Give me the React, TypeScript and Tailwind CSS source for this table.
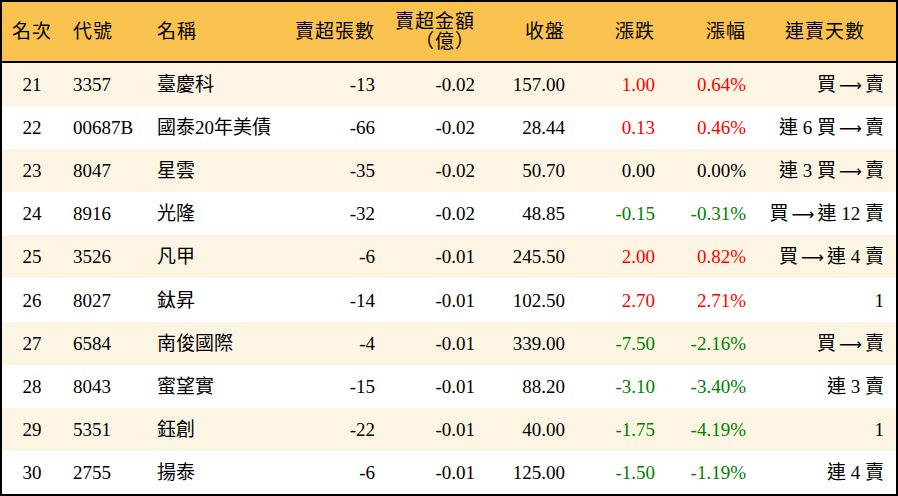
import React from 'react';

type Row = {
  rank: number;
  code: string;
  name: string;
  lots: string;
  amount: string;
  close: string;
  change: string;
  pct: string;
  streak: string;
};

const rows: Row[] = [
  { rank: 21, code: '3357', name: '臺慶科', lots: '-13', amount: '-0.02', close: '157.00', change: '1.00', pct: '0.64%', streak: '買 → 賣' },
  { rank: 22, code: '00687B', name: '國泰20年美債', lots: '-66', amount: '-0.02', close: '28.44', change: '0.13', pct: '0.46%', streak: '連 6 買 → 賣' },
  { rank: 23, code: '8047', name: '星雲', lots: '-35', amount: '-0.02', close: '50.70', change: '0.00', pct: '0.00%', streak: '連 3 買 → 賣' },
  { rank: 24, code: '8916', name: '光隆', lots: '-32', amount: '-0.02', close: '48.85', change: '-0.15', pct: '-0.31%', streak: '買 → 連 12 賣' },
  { rank: 25, code: '3526', name: '凡甲', lots: '-6', amount: '-0.01', close: '245.50', change: '2.00', pct: '0.82%', streak: '買 → 連 4 賣' },
  { rank: 26, code: '8027', name: '鈦昇', lots: '-14', amount: '-0.01', close: '102.50', change: '2.70', pct: '2.71%', streak: '1' },
  { rank: 27, code: '6584', name: '南俊國際', lots: '-4', amount: '-0.01', close: '339.00', change: '-7.50', pct: '-2.16%', streak: '買 → 賣' },
  { rank: 28, code: '8043', name: '蜜望實', lots: '-15', amount: '-0.01', close: '88.20', change: '-3.10', pct: '-3.40%', streak: '連 3 賣' },
  { rank: 29, code: '5351', name: '鈺創', lots: '-22', amount: '-0.01', close: '40.00', change: '-1.75', pct: '-4.19%', streak: '1' },
  { rank: 30, code: '2755', name: '揚泰', lots: '-6', amount: '-0.01', close: '125.00', change: '-1.50', pct: '-1.19%', streak: '連 4 賣' },
];

const cols = 'grid grid-cols-[60px_84px_144px_96px_100px_90px_90px_91px_139px]';

const tone = (v: string) => {
  if (v.startsWith('-')) return 'text-[#008000]';
  if (/^0\.00/.test(v)) return 'text-black';
  return 'text-[#ff0000]';
};

// the arrow in the source is a long one, wider than the serif glyph
const Streak = ({ text }: { text: string }) => {
  const parts = text.split(' → ');
  return (
    <>
      {parts.map((p, i) => (
        <React.Fragment key={i}>
          {i > 0 && <span className="font-['DejaVu_Sans',sans-serif] text-[16px] mx-[3px]">⟶</span>}
          {p}
        </React.Fragment>
      ))}
    </>
  );
};

const App = () => {
  return (
    <div className="w-[898px] h-[496px] bg-white border-2 border-black font-['Liberation_Serif','Noto_Sans_CJK_TC',serif] text-[19px] text-black leading-none">
      <div className={`${cols} h-[61px] bg-[#f9c24e] border-b-2 border-black items-center tracking-[1px]`}>
        <div className="text-center">名次</div>
        <div className="pl-[11px]">代號</div>
        <div className="pl-[11px]">名稱</div>
        <div className="text-right pr-[11px]">賣超張數</div>
        <div className="text-right pr-[11px] leading-[20px]">
          賣超金額
          <br />
          （億）
        </div>
        <div className="text-right pr-[11px]">收盤</div>
        <div className="text-right pr-[11px]">漲跌</div>
        <div className="text-right pr-[11px]">漲幅</div>
        <div className="text-right pr-[31px]">連賣天數</div>
      </div>
      {rows.map((r, i) => (
        <div
          key={r.rank}
          className={`${cols} h-[43.1px] items-center ${i % 2 === 0 ? 'bg-[#fdf5e3]' : 'bg-white'}`}
        >
          <div className="text-center">{r.rank}</div>
          <div className="pl-[11px]">{r.code}</div>
          <div className="pl-[11px]">{r.name}</div>
          <div className="text-right pr-[11px]">{r.lots}</div>
          <div className="text-right pr-[11px]">{r.amount}</div>
          <div className="text-right pr-[11px]">{r.close}</div>
          <div className={`text-right pr-[11px] ${tone(r.change)}`}>{r.change}</div>
          <div className={`text-right pr-[11px] ${tone(r.pct)}`}>{r.pct}</div>
          <div className="text-right pr-[12px] whitespace-pre">
            <Streak text={r.streak} />
          </div>
        </div>
      ))}
    </div>
  );
};

export default App;
